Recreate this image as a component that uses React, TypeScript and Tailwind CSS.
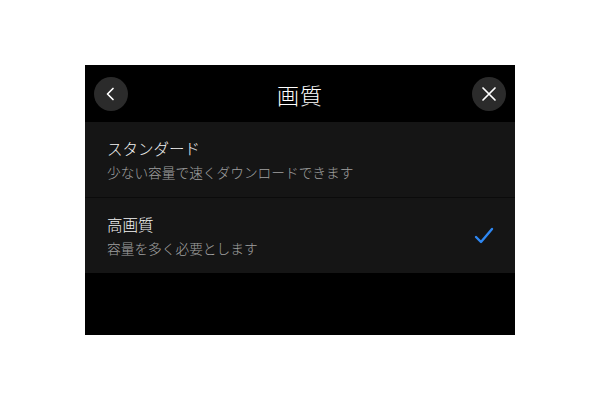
const options = [
  { title: "スタンダード", note: "少ない容量で速くダウンロードできます", selected: false },
  { title: "高画質", note: "容量を多く必要とします", selected: true },
];

function RoundButton({ children }: { children: React.ReactNode }) {
  return (
    <button className="w-[34px] h-[34px] rounded-full bg-[#2b2b2b] flex items-center justify-center text-white">
      {children}
    </button>
  );
}

export default function App() {
  return (
    <div
      className="w-[600px] h-[400px] bg-white flex items-center justify-center"
      style={{ fontFamily: '"Noto Sans CJK JP", "Noto Sans", sans-serif' }}
    >
      <div className="w-[430px] h-[270px] bg-black flex flex-col">
        {/* Header */}
        <div className="h-[57px] flex items-center justify-between px-[9px]">
          <RoundButton>
            <svg width="16" height="16" viewBox="0 0 16 16" fill="none" stroke="currentColor" strokeWidth="1.7" strokeLinecap="round" strokeLinejoin="round">
              <path d="M10 2.5L4.5 8l5.5 5.5" />
            </svg>
          </RoundButton>
          <h1 className="text-[22px] leading-none font-light text-white tracking-[1px]">画質</h1>
          <RoundButton>
            <svg width="18" height="18" viewBox="0 0 18 18" fill="none" stroke="currentColor" strokeWidth="1.7" strokeLinecap="round">
              <path d="M3 3l12 12M15 3L3 15" />
            </svg>
          </RoundButton>
        </div>

        {/* Quality options */}
        <div className="flex flex-col">
          {options.map((o, i) => (
            <div
              key={o.title}
              className={`bg-[#151515] flex items-center justify-between pl-[22px] pr-[21px] ${i > 0 ? "border-t border-[#0b0b0b] h-[76px]" : "h-[75px]"}`}
            >
              <div className="flex flex-col font-light">
                <span className="text-[15.5px] leading-[20px] text-[#f4f4f4]">{o.title}</span>
                <span className="mt-[5px] text-[13.7px] leading-[18px] text-[#a0a0a0]">{o.note}</span>
              </div>
              {o.selected && (
                <svg width="20" height="18" viewBox="0 0 20 18" fill="none" stroke="#2e87f2" strokeWidth="2.4" strokeLinecap="round" strokeLinejoin="round">
                  <path d="M2 10l5 5L18 2" />
                </svg>
              )}
            </div>
          ))}
        </div>
      </div>
    </div>
  );
}
